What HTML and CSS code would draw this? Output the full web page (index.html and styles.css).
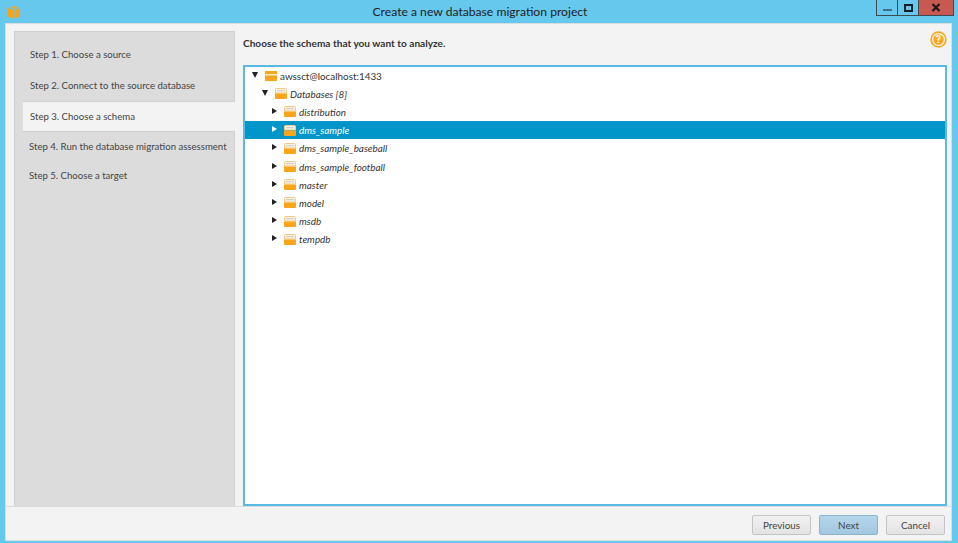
FILE: index.html
```html
<!DOCTYPE html>
<html lang="en">
<head>
<meta charset="utf-8">
<title>Create a new database migration project</title>
<link rel="stylesheet" href="styles.css">
</head>
<body>
<div class="window">
  <header class="titlebar">
    <div class="app-icon">
      <svg width="14" height="14" viewBox="0 0 14 14"><path d="M7 1 L11 2.4 L7 3.8 L3 2.4Z" fill="#f5a623"/><path d="M1 3 L6.4 4.8 V13.5 L1 11.5Z" fill="#f7a21b"/><path d="M13 3 L7.6 4.8 V13.5 L13 11.5Z" fill="#f7a21b"/></svg>
    </div>
    <div class="title">Create a new database migration project</div>
    <div class="controls">
      <button class="ctl ctl-min"><span class="min-glyph"></span></button>
      <button class="ctl ctl-max"><span class="max-glyph"></span></button>
      <button class="ctl ctl-close">
        <svg width="10" height="9" viewBox="0 0 10 9"><path d="M1.5 1 L8.5 8 M8.5 1 L1.5 8" stroke="#1a1a1a" stroke-width="2.2"/></svg>
      </button>
    </div>
  </header>
  <div class="client">
    <div class="main">
      <nav class="steps">
        <div class="step s1">Step 1. Choose a source</div>
        <div class="step s2">Step 2. Connect to the source database</div>
        <div class="step s3 active">Step 3. Choose a schema</div>
        <div class="step s4">Step 4. Run the database migration assessment</div>
        <div class="step s5">Step 5. Choose a target</div>
      </nav>
      <section class="content">
        <div class="heading-row">
          <h1 class="heading">Choose the schema that you want to analyze.</h1>
          <svg class="help" width="17" height="17" viewBox="0 0 17 17"><circle cx="8.5" cy="8.5" r="7.4" fill="#fbf3e2" stroke="#f9a825" stroke-width="1.7"/><circle cx="8.5" cy="8.5" r="5.2" fill="#f9a825"/><text x="8.5" y="12" text-anchor="middle" class="help-q">?</text></svg>
        </div>
        <div class="tree">
          <div class="row lvl0"><span class="arrow down"></span><svg class="ico" width="12" height="10" viewBox="0 0 12 10"><rect width="12" height="10" fill="#f7a51e"/><rect y="3" width="12" height="1.4" fill="#fff3d8"/></svg><span class="label plain">awssct@localhost:1433</span></div>
          <div class="row lvl1"><span class="arrow down"></span><svg class="ico" width="12" height="11" viewBox="0 0 12 11"><use href="#folder"/></svg><span class="label">Databases [8]</span></div>
          <div class="row lvl2"><span class="arrow right"></span><svg class="ico" width="12" height="11" viewBox="0 0 12 11"><use href="#folder"/></svg><span class="label">distribution</span></div>
          <div class="row lvl2 selected"><span class="arrow right"></span><svg class="ico" width="12" height="11" viewBox="0 0 12 11"><use href="#folder"/></svg><span class="label">dms_sample</span></div>
          <div class="row lvl2"><span class="arrow right"></span><svg class="ico" width="12" height="11" viewBox="0 0 12 11"><use href="#folder"/></svg><span class="label">dms_sample_baseball</span></div>
          <div class="row lvl2"><span class="arrow right"></span><svg class="ico" width="12" height="11" viewBox="0 0 12 11"><use href="#folder"/></svg><span class="label">dms_sample_football</span></div>
          <div class="row lvl2"><span class="arrow right"></span><svg class="ico" width="12" height="11" viewBox="0 0 12 11"><use href="#folder"/></svg><span class="label">master</span></div>
          <div class="row lvl2"><span class="arrow right"></span><svg class="ico" width="12" height="11" viewBox="0 0 12 11"><use href="#folder"/></svg><span class="label">model</span></div>
          <div class="row lvl2"><span class="arrow right"></span><svg class="ico" width="12" height="11" viewBox="0 0 12 11"><use href="#folder"/></svg><span class="label">msdb</span></div>
          <div class="row lvl2"><span class="arrow right"></span><svg class="ico" width="12" height="11" viewBox="0 0 12 11"><use href="#folder"/></svg><span class="label">tempdb</span></div>
        </div>
      </section>
    </div>
    <footer class="footer">
      <button class="btn">Previous</button>
      <button class="btn primary">Next</button>
      <button class="btn">Cancel</button>
    </footer>
  </div>
</div>
<svg class="defs" width="0" height="0"><defs><g id="folder"><path d="M1.5 0.5 H10.5 Q11.5 0.5 11.5 1.5 V5 H0.5 V1.5 Q0.5 0.5 1.5 0.5Z" fill="#fdf3df" stroke="#f2c88a" stroke-width="1"/><rect x="2" y="2.2" width="8" height="1" fill="#c9c9c9"/><path d="M0 5.5 H12 V10 Q12 11 11 11 H1 Q0 11 0 10Z" fill="#f9a51a"/></g></defs></svg>
</body>
</html>
```
FILE: styles.css
```css
* { box-sizing: border-box; }
html, body { margin: 0; padding: 0; }
body { width: 958px; height: 543px; overflow: hidden; background: #66c8ec; font-family: Lato, Roboto, sans-serif; color: #333; }
.window { display: flex; flex-direction: column; height: 543px; padding: 0 6px 2px 5px; }
.titlebar { position: relative; flex: 0 0 23px; display: flex; align-items: flex-start; }
.app-icon { padding: 3px 0 0 2px; height: 20px; }
.title { position: absolute; left: 0; right: 0; top: 3px; text-align: center; font-size: 12.15px; line-height: 17px; color: #222; padding-left: 3px; }
.controls { margin-left: auto; display: flex; position: relative; left: 2px; }
.ctl { height: 16px; padding: 0; margin: 0; border: 1px solid #3c4a52; border-top: 0; display: flex; align-items: center; justify-content: center; background: #66c8ec; }
.ctl-min { width: 21px; border-right: 0; }
.ctl-max { width: 21px; border-right: 0; }
.ctl-close { width: 36px; background: #c75a50; }
.min-glyph { width: 9px; height: 2px; background: #3f6f87; margin-top: 4px; }
.max-glyph { width: 9px; height: 8px; border: 2px solid #10202a; }
.client { flex: 1; min-height: 0; display: flex; flex-direction: column; background: #f3f3f3; border: 1px solid #d9dde0; }
.main { flex: 1; min-height: 0; display: flex; padding: 7px 4px 0 8px; }
.steps { flex: 0 0 221px; min-width: 0; background: #dcdcdc; border: 1px solid #d0d0d0; border-bottom: 0; font-size: 9.6px; color: #444; padding-top: 7px; }
.step { height: 31px; line-height: 31.5px; padding-left: 15px; white-space: nowrap; }
.s3.active { margin-left: 7px; margin-right: -1px; height: 31px; padding-left: 7px; background: #f3f3f3; border: 1px solid #d0d0d0; border-right: 0; border-left-color: #e0e0e0; line-height: 29px; }
.s4 { height: 29px; padding-left: 14px; line-height: 29px; }
.s5 { height: 29px; padding-left: 14px; line-height: 29px; }
.content { flex: 1; min-width: 0; display: flex; flex-direction: column; padding: 0 0 0 8px; }
.heading-row { flex: 0 0 34px; display: flex; align-items: flex-start; justify-content: space-between; }
.heading { margin: 6px 0 0; font-size: 10.1px; line-height: 13px; font-weight: 700; color: #333; }
.help-q { font: 700 10px Roboto, sans-serif; fill: #fff; }
.tree { flex: 1; min-height: 0; background: #fff; border: 2px solid #5ab9e4; }
.row { display: flex; align-items: center; height: 18.2px; padding-top: 1px; font-size: 9.9px; color: #333; font-style: italic; }
.lvl0 { padding-left: 7px; margin-top: -1px; }
.lvl1 { padding-left: 17px; }
.lvl2 { padding-left: 25px; }
.arrow { display: block; width: 0; height: 0; flex: none; }
.arrow.down { border-left: 3.5px solid transparent; border-right: 3.5px solid transparent; border-top: 6px solid #222; margin: 0 7px 2px 0; }
.arrow.right { border-top: 3.5px solid transparent; border-bottom: 3.5px solid transparent; border-left: 5px solid #222; margin: 0 7px 2px 2px; }
.ico { flex: none; margin-right: 3px; }
.label { line-height: 18px; white-space: nowrap; }
.label.plain { font-style: normal; }
.selected { background: #0096c9; color: #fff; }
.selected .arrow.right { border-left-color: #fff; }
.footer { flex: 0 0 34px; display: flex; justify-content: flex-end; align-items: flex-start; gap: 8px; padding: 8px 6px 0 0; border-top: 1px solid #dcdcdc; }
.btn { width: 59px; height: 20px; padding: 0; font: 9.8px Lato, sans-serif; color: #444; background: linear-gradient(#f1f1f1, #e3e3e3); border: 1px solid #c4c4c4; border-radius: 2px; }
.primary { background: linear-gradient(#b5d6ea, #a2c8df); border-color: #8bb4cc; }
.defs { position: absolute; }
```
